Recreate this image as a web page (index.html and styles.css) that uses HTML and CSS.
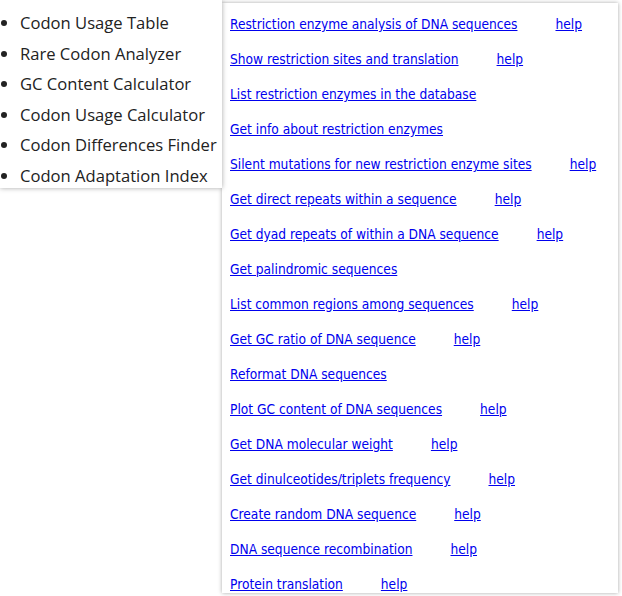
FILE: index.html
```html
<!DOCTYPE html>
<html>
<head>
<meta charset="utf-8">
<link rel="stylesheet" href="styles.css">
</head>
<body>
<div class="page">
  <div class="menu">
    <ul class="menu-list">
      <li>Codon Usage Table</li>
      <li>Rare Codon Analyzer</li>
      <li>GC Content Calculator</li>
      <li>Codon Usage Calculator</li>
      <li>Codon Differences Finder</li>
      <li>Codon Adaptation Index</li>
    </ul>
  </div>
  <div class="tools">
    <div class="row"><a href="#">Restriction enzyme analysis of DNA sequences</a><a class="help" href="#">help</a></div>
    <div class="row"><a href="#">Show restriction sites and translation</a><a class="help" href="#">help</a></div>
    <div class="row"><a href="#">List restriction enzymes in the database</a></div>
    <div class="row"><a href="#">Get info about restriction enzymes</a></div>
    <div class="row"><a href="#">Silent mutations for new restriction enzyme sites</a><a class="help" href="#">help</a></div>
    <div class="row"><a href="#">Get direct repeats within a sequence</a><a class="help" href="#">help</a></div>
    <div class="row"><a href="#">Get dyad repeats of within a DNA sequence</a><a class="help" href="#">help</a></div>
    <div class="row"><a href="#">Get palindromic sequences</a></div>
    <div class="row"><a href="#">List common regions among sequences</a><a class="help" href="#">help</a></div>
    <div class="row"><a href="#">Get GC ratio of DNA sequence</a><a class="help" href="#">help</a></div>
    <div class="row"><a href="#">Reformat DNA sequences</a></div>
    <div class="row"><a href="#">Plot GC content of DNA sequences</a><a class="help" href="#">help</a></div>
    <div class="row"><a href="#">Get DNA molecular weight</a><a class="help" href="#">help</a></div>
    <div class="row"><a href="#">Get dinulceotides/triplets frequency</a><a class="help" href="#">help</a></div>
    <div class="row"><a href="#">Create random DNA sequence</a><a class="help" href="#">help</a></div>
    <div class="row"><a href="#">DNA sequence recombination</a><a class="help" href="#">help</a></div>
    <div class="row"><a href="#">Protein translation</a><a class="help" href="#">help</a></div>
  </div>
</div>
</body>
</html>
```
FILE: styles.css
```css
html, body {
  margin: 0;
  padding: 0;
  background: #fff;
  overflow: hidden;
}
.page {
  display: flex;
  align-items: flex-start;
  height: 596px;
}
.menu {
  position: relative;
  z-index: 2;
  width: 222px;
  flex: none;
  background: #fff;
  box-shadow: 0 0 5px rgba(0,0,0,0.35);
  padding: 10px 0 0 0;
  height: 188px;
  box-sizing: border-box;
}
.menu-list {
  margin: 0;
  padding: 0 0 0 20px;
  font-family: "Open Sans", sans-serif;
  font-size: 16.6px;
  color: #222;
}
.menu-list li {
  line-height: 26px;
  margin-bottom: 4.6px;
}
.tools {
  flex: none;
  width: 396px;
  margin-top: 3px;
  height: 590px;
  background: #fff;
  box-shadow: 0 0 4px rgba(0,0,0,0.35);
  padding: 4px 0 0 8px;
  box-sizing: border-box;
  font-family: "DejaVu Sans Condensed", "DejaVu Sans", sans-serif;
  font-size: 13.65px;
}
.row {
  height: 35px;
  line-height: 35px;
  white-space: nowrap;
}
.row a {
  color: #0000ee;
}
.row .help {
  margin-left: 38px;
}
```
